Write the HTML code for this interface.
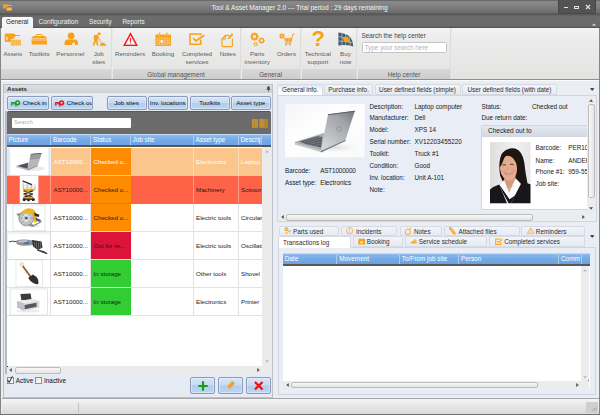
<!DOCTYPE html>
<html><head><meta charset="utf-8"><title>Tool &amp; Asset Manager</title>
<style>
*{box-sizing:border-box;margin:0;padding:0}
html,body{width:600px;height:415px;overflow:hidden;background:#e6eaf3}
body{font-family:"Liberation Sans","DejaVu Sans",sans-serif;font-size:6px;color:#222;position:relative;line-height:1}
.a{position:absolute}
.t{position:absolute;white-space:nowrap}
svg{position:absolute;overflow:visible}
.rl{position:absolute;text-align:center;font-size:6.25px;color:#5c5c5c;white-space:nowrap}
.gl{position:absolute;font-size:6.4px;color:#555;top:71.5px;text-align:center;white-space:nowrap}
.sep{position:absolute;top:28px;width:2px;height:51px;border-left:1px solid #dcdcdc;border-right:1px solid #e9e9e9}
.btn{position:absolute;height:14px;border:1px solid #8b9cb8;border-radius:2px;background:linear-gradient(#d6e5f8,#c6daf3 48%,#b0ccef 52%,#bdd5f4);box-shadow:inset 0 0 0 1px rgba(255,255,255,.35);font-size:6.25px;text-align:center;line-height:12.5px;color:#111;white-space:nowrap;overflow:hidden}
.hd{position:absolute;background:linear-gradient(#a6c8f0,#8ab7ea 15%,#74aae5 55%,#6aa2e2);box-shadow:inset 0 1px 0 #c3dbf6;overflow:hidden}
.th{position:absolute;top:0;height:100%;color:#fff;font-size:6.4px;line-height:12px;padding-left:2px;border-right:1px solid #a9cbf0;white-space:nowrap;overflow:hidden}
.row{position:absolute;left:6px;width:256px;height:28px;overflow:hidden}
.c{position:absolute;top:0;height:100%;font-size:6.2px;line-height:28px;padding-left:2.5px;white-space:nowrap;overflow:hidden;border-right:1px solid rgba(220,220,220,.8)}
.tab{position:absolute;font-size:6.35px;color:#2e2e2e;background:#e9edf5;border:1px solid #d6dae3;border-radius:2px 2px 0 0;white-space:nowrap;overflow:hidden;line-height:11px}
.lb{position:absolute;font-size:6.35px;color:#1a1a1a;white-space:nowrap}
.sb{position:absolute;background:#e9e9e9}
.thumb{position:absolute;background:linear-gradient(#f8f8f8,#e4e4e4);border:1px solid #bdbdbd;border-radius:2px}
.vthumb{position:absolute;background:linear-gradient(90deg,#f8f8f8,#e4e4e4);border:1px solid #bdbdbd;border-radius:2px}
</style></head><body>

<div class="a" style="left:0;top:0;width:600px;height:28px;background:#636363"></div>
<div class="a" style="left:0;top:0;width:600px;height:14px;background:linear-gradient(#5c5c5c,#8a8a8a 12%,#7e7e7e 50%,#6c6c6c 90%,#626262)"></div>
<div class="a" style="left:0;top:13.3px;width:600px;height:2.2px;background:linear-gradient(#606060,#565656 60%,#5e5e5e)"></div>
<div class="a" style="left:0;top:15.5px;width:600px;height:12.5px;background:linear-gradient(#6c6c6c,#6a6a6a 85%,#565656 92%,#565656)"></div>
<div class="t" style="left:211px;width:177px;text-align:center;top:4.6px;font-size:6.55px;color:#f6f6f6">Tool &amp; Asset Manager 2.0 --- Trial period : 29 days remaining</div>
<div class="a" style="left:558px;top:0;width:38px;height:13.5px;background:#535353;border:1px solid #474747;border-top:none;border-radius:0 0 2px 2px"></div>
<div class="a" style="left:564px;top:6.5px;width:4px;height:1.6px;background:#e4e4e4"></div>
<div class="a" style="left:574px;top:5.5px;width:5px;height:3.6px;border:1px solid #e4e4e4;border-top-width:1.4px"></div>
<svg style="left:586px;top:5.4px" width="4" height="4" viewBox="0 0 4 4"><path d="M0 0L4 4M4 0L0 4" stroke="#e4e4e4" stroke-width="1.1"/></svg>
<svg style="left:592px;top:22.5px" width="4" height="3" viewBox="0 0 4 3"><path d="M0 2.6L2 .4 4 2.6z" fill="#e8e4cc"/></svg>
<svg style="left:3px;top:4px" width="9" height="7" viewBox="0 0 9 7"><path d="M0 .3h4.5l2 .8H9v.8H6.3L4.5 2.8H3V4.5H.3z" fill="#f9a11b"/><rect x="3.6" y="3.6" width="5.2" height="3" fill="#f7b95a"/></svg>
<div class="a" style="left:2px;top:17px;width:30.5px;height:11px;background:linear-gradient(#fbfbfb,#f1f1f1);border-radius:2px 2px 0 0"></div>
<div class="t" style="left:6px;top:19.3px;font-size:6.3px;color:#222">General</div>
<div class="t" style="left:38.5px;top:19.1px;font-size:6.7px;color:#f2f2f2">Configuration</div>
<div class="t" style="left:89px;top:19.3px;font-size:6.3px;color:#f2f2f2">Security</div>
<div class="t" style="left:122.5px;top:19.3px;font-size:6.3px;color:#f2f2f2">Reports</div>
<div class="a" style="left:0;top:28px;width:600px;height:51px;background:linear-gradient(#f4f4f4,#ececec 20%,#e3e3e1)"></div>
<div class="a" style="left:0;top:68.5px;width:450px;height:10.5px;background:linear-gradient(#d8d8d8,#cdcdcd)"></div>
<div class="a" style="left:0;top:79px;width:600px;height:1px;background:#8f8f8f"></div>
<div class="a" style="left:0;top:80px;width:600px;height:1px;background:#fafafa"></div>
<div class="sep" style="left:111px"></div>
<div class="sep" style="left:240px"></div>
<div class="sep" style="left:300px"></div>
<div class="sep" style="left:356px"></div>
<div class="sep" style="left:450px"></div>
<div class="rl" style="left:-17.2px;width:60px;top:50.6px">Assets</div>
<div class="rl" style="left:9.200000000000003px;width:60px;top:50.6px">Toolkits</div>
<div class="rl" style="left:40.3px;width:60px;top:50.6px">Personnel</div>
<div class="rl" style="left:68.7px;width:60px;top:50.6px">Job</div>
<div class="rl" style="left:68.7px;width:60px;top:58.900000000000006px">sites</div>
<div class="rl" style="left:100px;width:60px;top:50.6px">Reminders</div>
<div class="rl" style="left:133px;width:60px;top:50.6px">Booking</div>
<div class="rl" style="left:167px;width:60px;top:50.6px">Completed</div>
<div class="rl" style="left:167px;width:60px;top:58.900000000000006px">services</div>
<div class="rl" style="left:197.8px;width:60px;top:50.6px">Notes</div>
<div class="rl" style="left:227.2px;width:60px;top:50.6px">Parts</div>
<div class="rl" style="left:227.2px;width:60px;top:58.900000000000006px">inventory</div>
<div class="rl" style="left:256.5px;width:60px;top:50.6px">Orders</div>
<div class="rl" style="left:287.8px;width:60px;top:50.6px">Technical</div>
<div class="rl" style="left:287.8px;width:60px;top:58.900000000000006px">support</div>
<div class="rl" style="left:315.5px;width:60px;top:50.6px">Buy</div>
<div class="rl" style="left:315.5px;width:60px;top:58.900000000000006px">now</div>
<div class="gl" style="left:136px;width:80px">Global management</div>
<div class="gl" style="left:240px;width:61px">General</div>
<div class="gl" style="left:364px;width:80px">Help center</div>
<div class="t" style="left:361.5px;top:32.5px;font-size:6.4px;color:#444">Search the help center</div>
<div class="a" style="left:361.5px;top:42px;width:85px;height:11px;background:#fff;border:1px solid #c4c4c4;border-radius:1.5px"></div>
<div class="t" style="left:364.5px;top:44.5px;font-size:6.4px;color:#b4b4b4">Type your search here</div>
<svg style="left:4px;top:32.5px" width="18" height="13" viewBox="0 0 18 13"><path d="M.8 1.2Q.8.6 1.6.6H9.5L12 1.9H16v1.2H12L9.8 4.4V6H7V9H1.6Q.8 9 .8 8.2z" fill="#f9a11b"/><rect x="2.3" y="4" width="1.2" height="3.2" fill="#fff" opacity=".9"/><rect x="6.8" y="6.7" width="10" height="5.8" fill="#fbc877"/><path d="M8 6.7v5.8M10 6.7v5.8M12.2 6.7v5.8M14.3 6.7v5.8M16 6.7v5.8" stroke="#f9a11b" stroke-width=".9" opacity=".75"/></svg>
<svg style="left:31px;top:33.5px" width="17" height="11" viewBox="0 0 17 11"><path d="M5 2V1.2Q5 .5 5.8 .5H10.6Q11.4.5 11.4 1.2V2" fill="none" stroke="#f9a11b" stroke-width="1"/><path d="M3 2H13.5Q15.5 2.4 16 4.6H.6Q1 2.4 3 2z" fill="#f9a11b"/><rect x=".6" y="5.2" width="15.4" height="5.3" fill="#f9a11b"/><path d="M.6 6.2H16" stroke="#fde3b5" stroke-width=".5"/><circle cx="8.3" cy="5" r="1.2" fill="#f9a11b" stroke="#fde3b5" stroke-width=".5"/></svg>
<svg style="left:63.5px;top:32px" width="14.5" height="13.5" viewBox="0 0 14.5 13.5"><circle cx="7.1" cy="3.8" r="3.4" fill="#f9a11b"/><path d="M.5 13V10.5Q.7 8 3.5 7.6H10.8Q13.8 8 14 10.5V13H11V10.8H8.3V13z" fill="#f9a11b"/></svg>
<svg style="left:91px;top:32px" width="16" height="14.5" viewBox="0 0 16 14.5"><circle cx="8.2" cy="1.8" r="1.5" fill="#f9a11b"/><path d="M3 3.2L6.4 2.6 7.8 4.8 6.6 8.2 7.4 13.6H5.8L5 9.6 3.4 13.6H1.6L3.3 8.4 2.6 5.4z" fill="#f9a11b"/><path d="M7 5L11 11.6" stroke="#f9a11b" stroke-width=".8"/><path d="M8.2 13.8Q10 10.6 11.8 10.6T15.6 13.8z" fill="#f9a11b"/></svg>
<svg style="left:122.5px;top:32px" width="15" height="14.5" viewBox="0 0 15 14.5"><path d="M7.5 1.6L13.8 13.4H1.2z" fill="#f0efef" stroke="#ff0d0d" stroke-width="1.35" stroke-linejoin="miter"/><path d="M7.5 6V10.4" stroke="#ff2a2a" stroke-width="1.1"/><circle cx="7.5" cy="11.7" r=".55" fill="#ff2a2a"/></svg>
<svg style="left:155px;top:32px" width="16.5" height="14.5" viewBox="0 0 16.5 14.5"><rect x=".4" y="2.6" width="15.6" height="11.4" rx=".8" fill="#f9a11b"/><path d="M4.6.4V3.6M11.8.4V3.6" stroke="#f9a11b" stroke-width="1.1"/><path d="M4.6 2.3V4.2M11.8 2.3V4.2" stroke="#fff" stroke-width=".5" opacity=".7"/><g stroke="#fde0b0" stroke-width=".45"><path d="M2 6H14.6M2 8.3H14.6M2 10.6H14.6M2 12.6H14.6M2 6V12.6M4.6 6V12.6M7.1 6V12.6M9.7 6V12.6M12.2 6V12.6M14.6 6V12.6"/></g><rect x="5.6" y="8.4" width="2.2" height="2.2" fill="#fff"/></svg>
<svg style="left:189px;top:33px" width="16.5" height="12.5" viewBox="0 0 16.5 12.5"><path d="M11.8 6.6V11.2H1V1H11.8V2.2" fill="none" stroke="#f9a11b" stroke-width="1.6"/><path d="M4 5L7 7.8 15.4 2.2" fill="none" stroke="#f9a11b" stroke-width="1.7"/></svg>
<svg style="left:221px;top:31.5px" width="13" height="15.5" viewBox="0 0 13 15.5"><path d="M4.4 3.4H8.2M11.4 6.6V13.4Q11.4 14.6 10.2 14.6H2.2Q1 14.6 1 13.4V6.8L4.4 3.4V6.8H1" fill="none" stroke="#f9a11b" stroke-width="1.15" stroke-linejoin="round"/><path d="M6.6 7.4L7.4 5 11 1.2 12.4 2.6 8.8 6.4z" fill="#f9a11b"/></svg>
<svg style="left:248px;top:31px" width="18" height="17" viewBox="248 31 18 17"><circle cx="254.5" cy="36.6" r="2.60" fill="none" stroke="#f9a11b" stroke-width="1.76"/><path d="M257.44 36.60L258.70 36.60" stroke="#f9a11b" stroke-width="1.43"/><path d="M256.58 38.68L257.47 39.57" stroke="#f9a11b" stroke-width="1.43"/><path d="M254.50 39.54L254.50 40.80" stroke="#f9a11b" stroke-width="1.43"/><path d="M252.42 38.68L251.53 39.57" stroke="#f9a11b" stroke-width="1.43"/><path d="M251.56 36.60L250.30 36.60" stroke="#f9a11b" stroke-width="1.43"/><path d="M252.42 34.52L251.53 33.63" stroke="#f9a11b" stroke-width="1.43"/><path d="M254.50 33.66L254.50 32.40" stroke="#f9a11b" stroke-width="1.43"/><path d="M256.58 34.52L257.47 33.63" stroke="#f9a11b" stroke-width="1.43"/><circle cx="261.6" cy="40.6" r="1.92" fill="none" stroke="#f9a11b" stroke-width="1.30"/><path d="M263.77 40.60L264.70 40.60" stroke="#f9a11b" stroke-width="1.05"/><path d="M263.13 42.13L263.79 42.79" stroke="#f9a11b" stroke-width="1.05"/><path d="M261.60 42.77L261.60 43.70" stroke="#f9a11b" stroke-width="1.05"/><path d="M260.07 42.13L259.41 42.79" stroke="#f9a11b" stroke-width="1.05"/><path d="M259.43 40.60L258.50 40.60" stroke="#f9a11b" stroke-width="1.05"/><path d="M260.07 39.07L259.41 38.41" stroke="#f9a11b" stroke-width="1.05"/><path d="M261.60 38.43L261.60 37.50" stroke="#f9a11b" stroke-width="1.05"/><path d="M263.13 39.07L263.79 38.41" stroke="#f9a11b" stroke-width="1.05"/><circle cx="255.6" cy="44.2" r="1.43" fill="none" stroke="#f9a11b" stroke-width="0.97"/><path d="M257.21 44.20L257.90 44.20" stroke="#f9a11b" stroke-width="0.78"/><path d="M256.40 45.59L256.75 46.19" stroke="#f9a11b" stroke-width="0.78"/><path d="M254.79 45.59L254.45 46.19" stroke="#f9a11b" stroke-width="0.78"/><path d="M253.99 44.20L253.30 44.20" stroke="#f9a11b" stroke-width="0.78"/><path d="M254.79 42.81L254.45 42.21" stroke="#f9a11b" stroke-width="0.78"/><path d="M256.40 42.81L256.75 42.21" stroke="#f9a11b" stroke-width="0.78"/></svg>
<svg style="left:278.5px;top:32.5px" width="16" height="13" viewBox="0 0 16 13"><circle cx="3" cy="3" r="2.6" fill="#f9a11b"/><path d="M3 1.6V4.4" stroke="#fff" stroke-width=".6"/><path d="M5.2 5H13L12 9.2H6.4z" fill="#f9a11b"/><path d="M15.6 1.2H13.8L11.8 10.4H6" fill="none" stroke="#f9a11b" stroke-width=".9"/><circle cx="7" cy="11.8" r=".9" fill="#f9a11b"/><circle cx="11" cy="11.8" r=".9" fill="#f9a11b"/><path d="M7.6 5V9M9.4 5V9M11.2 5V9" stroke="#fde0b0" stroke-width=".4"/></svg>
<div class="t" style="left:311.6px;top:27.6px;font-size:22px;font-weight:bold;color:#f9a11b;line-height:1">?</div>
<svg style="left:338px;top:32px" width="15.5" height="15" viewBox="0 0 15.5 15"><path d="M.4.6Q8 1.4 11.4 4.6T15.2 14.4Q9 12.4 .4 13.4z" fill="#3f5c6e"/><g stroke="#e9e9e7" stroke-width=".55" fill="none"><path d="M.4 4.6Q7 5 10 7.4M.4 9Q8 9 14.4 10.8M4 .9V13M7.6 2V12.8M11 4.4Q12 8 12.2 13.4"/></g><path d="M4.6 5.2L9.6 4.6 12.4 10.4 6.2 10z" fill="#f9a11b"/></svg><div class="a" style="left:0;top:28px;width:1.1px;height:387px;background:#868686"></div>
<div class="a" style="left:598.8px;top:28px;width:1.2px;height:387px;background:#868686"></div>
<div class="a" style="left:1.1px;top:81px;width:597.7px;height:317px;background:#eaedf4"></div>
<div class="a" style="left:2.6px;top:83.5px;width:270.6px;height:314px;border:1px solid #bcc0ca;background:#e6eaf3"></div><div class="a" style="left:5.2px;top:111px;width:1.5px;height:263px;background:#b6bac4"></div>
<div class="a" style="left:4px;top:84.5px;width:268px;height:8.5px;background:linear-gradient(#e0e0e0,#cfcfcf)"></div>
<div class="t" style="left:7px;top:86px;font-size:6.1px;font-weight:bold;color:#222">Assets</div>
<svg style="left:266px;top:85.5px" width="5" height="6" viewBox="0 0 5 6"><path d="M1.4.4H3.6V3H4.4V3.7H.6V3H1.4z" fill="#333"/><path d="M2.5 3.7V5.8" stroke="#333" stroke-width=".6"/></svg>
<div class="btn" style="left:6.5px;top:95.5px;width:42.0px;text-align:left;"><svg style="left:3.2px;top:3px" width="9.5" height="7" viewBox="0 0 9.5 7"><path d="M.8 5.4V2.6H3.2V4.6" fill="none" stroke="#1f9c1f" stroke-width="1.4"/><circle cx="6.6" cy="2.8" r="1.9" fill="none" stroke="#1f9c1f" stroke-width="1.5"/><path d="M4.9 3.4V6.6" stroke="#1f9c1f" stroke-width="1.3"/></svg><span style="position:absolute;left:15.2px;top:0;font-size:6.2px">Check in</span></div>
<div class="btn" style="left:50.5px;top:95.5px;width:42.0px;text-align:left;"><svg style="left:3.2px;top:3px" width="9.5" height="7" viewBox="0 0 9.5 7"><path d="M.8 5.4V2.6H3.2V4.6" fill="none" stroke="#e8141c" stroke-width="1.4"/><circle cx="6.6" cy="2.8" r="1.9" fill="none" stroke="#e8141c" stroke-width="1.5"/><path d="M4.9 3.4V6.6" stroke="#e8141c" stroke-width="1.3"/></svg><span style="position:absolute;left:15.2px;top:0;font-size:6.2px">Check ou</span></div>
<div class="btn" style="left:106.5px;top:95.5px;width:40.0px;">Job sites</div>
<div class="btn" style="left:148px;top:95.5px;width:39.5px;">Inv. locations</div>
<div class="btn" style="left:190px;top:95.5px;width:39.5px;">Toolkits</div>
<div class="btn" style="left:231px;top:95.5px;width:39.5px;">Asset type</div>
<div class="a" style="left:6.5px;top:111px;width:264.5px;height:23px;background:#6b6b6b;border-top:1px solid #575757;border-radius:2px 2px 0 0"></div>
<div class="a" style="left:11.5px;top:118px;width:119.5px;height:10px;background:#fff;border-radius:1px"></div>
<div class="t" style="left:14px;top:120.3px;font-size:5.9px;color:#b0b0b0">Search</div>
<svg style="left:251.7px;top:118.6px;opacity:.88" width="15.6" height="8.8" viewBox="0 0 15.6 8.8"><rect x="0" y="0" width="6" height="8.8" fill="#d5981f"/><rect x="2" y="0" width="1" height="8.8" fill="#bf8d2c"/><rect x="4" y="0" width=".8" height="8.8" fill="#c4902a"/><rect x="7.3" y="0" width="6.2" height="8.8" fill="#d5981f"/><rect x="7.3" y="0" width="1.4" height="8.8" fill="#c08e2c"/><rect x="11.6" y="0" width="1.9" height="8.8" fill="#b98a30"/><rect x="14.3" y="0" width="1.3" height="8.8" fill="#dc9c1c"/></svg>
<div class="hd" style="left:6.5px;top:133.5px;width:264.5px;height:11.5px">
<div class="th" style="left:0.0px;width:44.5px;line-height:11.5px">Picture</div>
<div class="th" style="left:44.5px;width:40px;line-height:11.5px">Barcode</div>
<div class="th" style="left:84.5px;width:39.5px;line-height:11.5px">Status</div>
<div class="th" style="left:124.0px;width:63.0px;line-height:11.5px">Job site</div>
<div class="th" style="left:187.0px;width:45.0px;line-height:11.5px">Asset type</div>
<div class="th" style="left:232.0px;width:23.80000000000001px;line-height:11.5px">Descrip</div>
</div>
<div class="a" style="left:6.5px;top:145px;width:264.5px;height:1.6px;background:#585858"></div>
<div class="a" style="left:6.5px;top:146.6px;width:255.8px;height:219.4px;background:#fff"></div>
<div class="row" style="left:6.5px;top:147.5px;width:255.8px;background:#fac68b;color:#fff;border-bottom:1px solid #fac68b">
<div class="c" style="left:0;width:44.5px;border-color:rgba(255,255,255,.35);background:#dce9f8"></div>
<div class="c" style="left:44.5px;width:40px;border-color:rgba(255,255,255,.35)">AST10000...</div>
<div class="c" style="left:84.5px;width:39.5px;background:#ff8c00;color:#fff;border:none">Checked o...</div>
<div class="c" style="left:124px;width:63px;border-color:rgba(255,255,255,.35)"></div>
<div class="c" style="left:187px;width:45px;border-color:rgba(255,255,255,.35)">Electronics</div>
<div class="c" style="left:232px;width:23.8px;border:none">Laptop</div>
</div>
<div class="row" style="left:6.5px;top:175.5px;width:255.8px;background:#fe6347;color:#1a1a1a;border-bottom:1px solid #fe6347">
<div class="c" style="left:0;width:44.5px;border-color:rgba(255,255,255,.35)"></div>
<div class="c" style="left:44.5px;width:40px;border-color:rgba(255,255,255,.35)">AST10000...</div>
<div class="c" style="left:84.5px;width:39.5px;background:#ff8c00;color:#1a1a1a;border:none">Checked o...</div>
<div class="c" style="left:124px;width:63px;border-color:rgba(255,255,255,.35)"></div>
<div class="c" style="left:187px;width:45px;border-color:rgba(255,255,255,.35)">Machinery</div>
<div class="c" style="left:232px;width:23.8px;border:none">Scissor</div>
</div>
<div class="row" style="left:6.5px;top:203.5px;width:255.8px;background:#fff;color:#1a1a1a;border-bottom:1px solid #e2e2e2">
<div class="c" style="left:0;width:44.5px;border-color:#e2e2e2"></div>
<div class="c" style="left:44.5px;width:40px;border-color:#e2e2e2">AST10000...</div>
<div class="c" style="left:84.5px;width:39.5px;background:#ff8c00;color:#1a1a1a;border:none">Checked o...</div>
<div class="c" style="left:124px;width:63px;border-color:#e2e2e2"></div>
<div class="c" style="left:187px;width:45px;border-color:#e2e2e2">Electric tools</div>
<div class="c" style="left:232px;width:23.8px;border:none">Circular</div>
</div>
<div class="row" style="left:6.5px;top:231.5px;width:255.8px;background:#fff;color:#1a1a1a;border-bottom:1px solid #e2e2e2">
<div class="c" style="left:0;width:44.5px;border-color:#e2e2e2"></div>
<div class="c" style="left:44.5px;width:40px;border-color:#e2e2e2">AST10000...</div>
<div class="c" style="left:84.5px;width:39.5px;background:#dc143c;color:#1a1a1a;border:none">Out for re...</div>
<div class="c" style="left:124px;width:63px;border-color:#e2e2e2"></div>
<div class="c" style="left:187px;width:45px;border-color:#e2e2e2">Electric tools</div>
<div class="c" style="left:232px;width:23.8px;border:none">Oscillati</div>
</div>
<div class="row" style="left:6.5px;top:259.5px;width:255.8px;background:#fff;color:#1a1a1a;border-bottom:1px solid #e2e2e2">
<div class="c" style="left:0;width:44.5px;border-color:#e2e2e2"></div>
<div class="c" style="left:44.5px;width:40px;border-color:#e2e2e2">AST10000...</div>
<div class="c" style="left:84.5px;width:39.5px;background:#32cd32;color:#1a1a1a;border:none">In storage</div>
<div class="c" style="left:124px;width:63px;border-color:#e2e2e2"></div>
<div class="c" style="left:187px;width:45px;border-color:#e2e2e2">Other tools</div>
<div class="c" style="left:232px;width:23.8px;border:none">Shovel</div>
</div>
<div class="row" style="left:6.5px;top:287.5px;width:255.8px;background:#fff;color:#1a1a1a;border-bottom:1px solid #e2e2e2">
<div class="c" style="left:0;width:44.5px;border-color:#e2e2e2"></div>
<div class="c" style="left:44.5px;width:40px;border-color:#e2e2e2">AST10000...</div>
<div class="c" style="left:84.5px;width:39.5px;background:#32cd32;color:#1a1a1a;border:none">In storage</div>
<div class="c" style="left:124px;width:63px;border-color:#e2e2e2"></div>
<div class="c" style="left:187px;width:45px;border-color:#e2e2e2">Electronics</div>
<div class="c" style="left:232px;width:23.8px;border:none">Printer</div>
</div><svg style="left:9.6px;top:148.3px" width="38.4" height="27.0" viewBox="9.6 148.3 38.4 27.0"><rect x="9.6" y="148.3" width="38.4" height="27.0" fill="#fff" stroke="#eeeeee" stroke-width=".5"/><g transform="translate(11.84 150.5) scale(.42)"><ellipse cx="50.7" cy="43.6" rx="26" ry="6" fill="#e4e4e4" opacity=".8"/><polygon points="10,37.2 39.2,28.6 37.7,47.2 10.7,40.8" fill="#9a9da2"/><polygon points="14.2,37.2 37.5,30.6 36.3,43.2 20.7,39.8" fill="#4e5156"/><polygon points="10,37.2 36.5,46 36.5,47.8 10.3,39.8" fill="#c9cbce"/><polygon points="44.2,9.2 70,6.9 60.9,36.2 36.2,46.8" fill="#b3b6ba"/><polygon points="44.2,9.2 70,6.9 66,20 41.5,22.5" fill="#999ca1"/><polygon points="44.2,9.2 70,6.9 69.7,8.2 44.7,10.4" fill="#4d5054"/><polygon points="36.2,46.8 60.9,36.2 61.1,37.4 36.5,48.2" fill="#6d7074"/></g></svg>
<svg style="left:19.8px;top:176.4px" width="18.099999999999998" height="26.900000000000006" viewBox="19.8 176.4 18.099999999999998 26.900000000000006"><rect x="19.8" y="176.4" width="18.099999999999998" height="26.900000000000006" fill="#fff" stroke="#f4f4f4" stroke-width=".5"/><g><path d="M22.3 180.6L31.8 184.4L31.8 185.8L22.3 182z" fill="#1e1e1e"/><path d="M23 182V189.6M27 183.6V189.6M31 185.4V189.6M35 186.4V190" stroke="#8d8d8d" stroke-width=".5"/><path d="M22.4 185.6H35.4M22.4 187.6H35.4" stroke="#b9b9b9" stroke-width=".5"/><path d="M22.4 189.2H35.2L33.6 191.4H23.4z" fill="#e9a916"/><path d="M23.4 191.2L32.6 194.6M32.6 191.2L23.4 194.6M23.4 194.6L32.6 197.8M32.6 194.6L23.4 197.8" stroke="#222" stroke-width="1.3"/><path d="M23.4 191.2L32.6 194.6M23.4 194.6L32.6 197.8" stroke="#e0a216" stroke-width=".5"/><path d="M23 197.4H33.6V199.4H23z" fill="#e9a916"/><path d="M22.6 199H34.4V200.2H22.6z" fill="#1e1e1e"/><rect x="22.6" y="199" width="2.8" height="2.4" rx=".8" fill="#1e1e1e"/><rect x="27" y="199.4" width="2.6" height="2.2" rx=".8" fill="#1e1e1e"/><rect x="31.6" y="199" width="2.8" height="2.4" rx=".8" fill="#1e1e1e"/></g></svg>
<svg style="left:12.6px;top:204.5px" width="32.0" height="25.900000000000006" viewBox="12.6 204.5 32.0 25.900000000000006"><rect x="12.6" y="204.5" width="32.0" height="25.900000000000006" fill="#fff" stroke="#cfcfcf" stroke-width=".5"/><g><ellipse cx="30" cy="225.4" rx="10" ry="1.6" fill="#efefef"/><path d="M15.8 213.4L19.4 212.4L33 224.6L41 220.4L41.6 221.6L32.6 226.4L29 225.6z" fill="#8e9297"/><path d="M16.6 214.6L25 216.6M18.6 217L26 219.6M22 221.4L30 222.4" stroke="#a8acb0" stroke-width=".6"/><circle cx="25.8" cy="217.6" r="7.4" fill="#c4c7cb" stroke="#7b7f84" stroke-width=".8"/><circle cx="25.8" cy="217.6" r="4.6" fill="#dfe1e3" stroke="#969a9f" stroke-width=".5"/><path d="M21 213L30.4 222.4M30.6 212.8L21 222.4M19 217.6H32.6" stroke="#8d9196" stroke-width=".5"/><circle cx="25.8" cy="217.6" r="1.4" fill="#55595e"/><path d="M20.6 213.6Q22.6 208.8 27.6 207.8Q32.6 207.6 35 211L36.4 216L36.2 221.6L33.4 222.6Q34.6 216.6 31.6 213.4Q27.6 210.6 22.6 213z" fill="#f1b61a"/><path d="M33.4 212L39 214.2L38.4 216.6L34.4 215.4z" fill="#2a2a2a"/><path d="M35 217L40.6 219.4L39.6 221.4L35.6 220z" fill="#55585c"/></g></svg>
<svg style="left:7px;top:232.6px" width="43.3" height="26.400000000000006" viewBox="7 232.6 43.3 26.400000000000006"><rect x="7" y="232.6" width="43.3" height="26.400000000000006" fill="#fff" stroke="#c9c9c9" stroke-width=".5"/><g><path d="M9 241.5Q12 240.3 17 241.2" stroke="#333" stroke-width=".9" fill="none"/><path d="M16.5 240.2Q20 238.6 26 239.2L33 240.2L33.6 244.6L26 245.4Q19 245.4 16.5 243.4z" fill="#8f9499"/><path d="M18 240.6Q22 239.4 27 239.9L27 241.6L18 242z" fill="#c3c6ca"/><rect x="24.5" y="241.6" width="4.2" height="2" fill="#3f6fb4"/><path d="M32 239.6L41.5 241.2L42.5 247L38 249.6L33 246z" fill="#2f3133"/><path d="M34.6 241.2V247.4M36.6 241.4V248.4M38.6 241.8V248.6M40.4 242V248" stroke="#8a8d91" stroke-width=".6"/><path d="M37.5 249L43.8 250.6L47.6 252.8L47 253.8L42 252.2L37 250.2z" fill="#3c3e40"/></g></svg>
<svg style="left:15.6px;top:260.3px" width="26.699999999999996" height="26.599999999999966" viewBox="15.6 260.3 26.699999999999996 26.599999999999966"><rect x="15.6" y="260.3" width="26.699999999999996" height="26.599999999999966" fill="#fff" stroke="#d4d4d4" stroke-width=".5"/><g><path d="M21 264.6L30.6 277.6" stroke="#7a3d10" stroke-width="1.7"/><path d="M21 264.6L30.6 277.6" stroke="#c9711f" stroke-width="1"/><path d="M19.2 264L22.4 262.8L23.6 265.6L21 267.2z" fill="#f3ede4" stroke="#bda98a" stroke-width=".4"/><path d="M27.8 278.4L32.4 274.8Q36.4 276.6 37.8 280Q38.6 283.4 37.2 284.8Q31.6 284.4 27.8 278.4z" fill="#332f2e"/></g></svg>
<svg style="left:10px;top:288.6px" width="37.4" height="26.0" viewBox="10 288.6 37.4 26.0"><rect x="10" y="288.6" width="37.4" height="26.0" fill="#fff" stroke="#c9c9c9" stroke-width=".5"/><g><ellipse cx="28" cy="310.6" rx="12" ry="1.6" fill="#ececec"/><path d="M20.4 293.6L30.6 293L31.6 299.4L21.4 300z" fill="#3a3c3f"/><path d="M17 300.6L33.6 298.6L39.4 300.6L39.4 307.4L24 310.4L17 307z" fill="#d6d8db"/><path d="M17 300.6L33.6 298.6L39.4 300.6L24 303z" fill="#eceded"/><path d="M24.6 304.6L36.6 302.4L36.6 306.4L24.6 308.8z" fill="#55585c"/><path d="M17 300.6L24 303V310.4L17 307z" fill="#bfc2c6"/></g></svg>
<div class="sb" style="left:262.3px;top:146.6px;width:8.7px;height:219.4px;background:#ebebeb"></div>
<svg style="left:264.6px;top:150px" width="4" height="3" viewBox="0 0 4 3"><path d="M0 2.6L2 .2 4 2.6z" fill="#b9b9b9"/></svg>
<svg style="left:264.6px;top:359.5px" width="4" height="3" viewBox="0 0 4 3"><path d="M0 .2L2 2.6 4 .2z" fill="#b9b9b9"/></svg>
<div class="sb" style="left:6.5px;top:366px;width:264.5px;height:8px;background:#ebebeb"></div>
<div class="thumb" style="left:14.5px;top:366.6px;width:46.5px;height:7px"></div>
<svg style="left:9.4px;top:368.2px" width="3" height="4" viewBox="0 0 3 4"><path d="M2.8 0L.2 2 2.8 4z" fill="#555"/></svg>
<svg style="left:257px;top:368.2px" width="3" height="4" viewBox="0 0 3 4"><path d="M.2 0L2.8 2 .2 4z" fill="#555"/></svg>
<div class="a" style="left:6.5px;top:365.5px;width:1.2px;height:1.5px;background:#333"></div>
<div class="a" style="left:6.5px;top:377.3px;width:7px;height:7px;background:linear-gradient(135deg,#e6e6e6,#fff);border:1px solid #8e8f8f"></div>
<svg style="left:7.4px;top:376.2px" width="6" height="7.5" viewBox="0 0 6 7.5"><path d="M.6 4L2.2 6.4 5.4.4" fill="none" stroke="#222" stroke-width="1"/></svg>
<div class="t" style="left:15.8px;top:378.3px;font-size:6.4px;color:#111">Active</div>
<div class="a" style="left:35.2px;top:377.3px;width:7px;height:7px;background:linear-gradient(135deg,#e2e2e2,#fff);border:1px solid #8e8f8f"></div>
<div class="t" style="left:44px;top:378.3px;font-size:6.4px;color:#111">Inactive</div>
<div class="btn" style="left:190.3px;top:377px;width:25.0px;height:17px"><svg style="left:7px;top:2.6px" width="10" height="10" viewBox="0 0 10 10"><path d="M5 .3V9.7M.3 5H9.7" stroke="#16a016" stroke-width="2.2"/></svg></div>
<div class="btn" style="left:218px;top:377px;width:25px;height:17px"><svg style="left:7px;top:2.4px" width="10" height="11" viewBox="0 0 10 11"><path d="M6.2.8L9 3.2 3.8 9 1.2 6.6z" fill="#f9a11b"/><path d="M.9 7.2L3.2 9.4.3 10.6z" fill="#f7c06a"/></svg></div>
<div class="btn" style="left:245.8px;top:377px;width:25.0px;height:17px"><svg style="left:7.5px;top:3px" width="9.5" height="9.5" viewBox="0 0 10 10"><path d="M1 1L9 9M9 1L1 9" stroke="#e81212" stroke-width="2.4"/></svg></div>
<div class="a" style="left:1.5px;top:398px;width:597px;height:1px;background:#a6a6a6"></div>
<div class="a" style="left:1.5px;top:399px;width:597px;height:14.5px;background:linear-gradient(#f4f4f4,#e4e4e4 60%,#dadada)"></div>
<div class="a" style="left:0;top:413.5px;width:600px;height:1.5px;background:#6e6e6e"></div>
<div class="a" style="left:77.5px;top:403px;width:1px;height:10px;background:#c2c2c2"></div>
<div class="a" style="left:586px;top:402px;width:12px;height:11px;background:#cfcfcf"></div>
<svg style="left:591px;top:406px" width="6" height="6" viewBox="0 0 6 6"><path d="M4.5 1h1M3 2.5h1M4.5 2.5h1M1.5 4h1M3 4h1M4.5 4h1" stroke="#999" stroke-width=".8"/></svg><div class="a" style="left:276.8px;top:94.5px;width:320px;height:127.5px;background:#e8edf6;border:1px solid #d0d5df"></div>
<div class="tab" style="left:277.4px;top:83.9px;width:45.60000000000002px;height:11.599999999999994px;background:linear-gradient(#d9e6f7,#f6f9fd 45%,#fdfeff);border-bottom:none;line-height:10.599999999999994px;text-align:center">General info.</div>
<div class="tab" style="left:324.3px;top:84.1px;width:48.69999999999999px;height:10.5px;background:linear-gradient(#f1f4f9,#e6eaf2);line-height:9.5px;text-align:center">Purchase info.</div>
<div class="tab" style="left:374.5px;top:84.1px;width:86.0px;height:10.5px;background:linear-gradient(#f1f4f9,#e6eaf2);line-height:9.5px;text-align:center">User defined fields (simple)</div>
<div class="tab" style="left:461.8px;top:84.1px;width:95.40000000000003px;height:10.5px;background:linear-gradient(#f1f4f9,#e6eaf2);line-height:9.5px;text-align:center">User defined fields (with date)</div>
<svg style="left:589.5px;top:88px" width="4.4" height="3" viewBox="0 0 4.4 3"><path d="M0 .2H4.4L2.2 2.8z" fill="#222"/></svg>
<svg style="left:285.3px;top:104.4px" width="79.7" height="53.2" viewBox="285.3 104.4 79.7 53.2"><defs><linearGradient id="bgw" x1="0" y1="0" x2="1" y2="1"><stop offset="0" stop-color="#f5f5f5"/><stop offset=".4" stop-color="#fefefe"/><stop offset="1" stop-color="#fafafa"/></linearGradient><linearGradient id="lid" x1=".9" y1="0" x2=".25" y2="1"><stop offset="0" stop-color="#777a7f"/><stop offset=".3" stop-color="#a1a4a8"/><stop offset=".65" stop-color="#b9bbbf"/><stop offset="1" stop-color="#d4d6d8"/></linearGradient><radialGradient id="shd"><stop offset="0" stop-color="#dcdcdc"/><stop offset="1" stop-color="#fafafa" stop-opacity="0"/></radialGradient></defs><rect x="285.3" y="104.4" width="79.7" height="53.2" fill="url(#bgw)"/><ellipse cx="336" cy="148" rx="26" ry="6" fill="url(#shd)"/><polygon points="295,142.4 325,133.2 323,151.6 295.6,145" fill="#a9acb0"/><polygon points="299.6,142 318,136.6 322.6,137.4 321.6,148 307,144.6" fill="#5a5d62"/><path d="M304 142.2L322 137.4M307 143.4L322 139.8M311 144.4L322 142.2M315 145.6L322 144.4" stroke="#8a8d92" stroke-width=".5"/><polygon points="295,142.6 321.6,150.6 321.6,152.6 295.4,145" fill="#c4c6c9"/><polygon points="328.4,114.6 355.2,111.2 345.8,140.2 321,151.4" fill="url(#lid)"/><polygon points="328.4,114.6 355.2,111.2 355,112.2 328.6,115.6" fill="#5d6064"/><polygon points="321,151.4 345.8,140.2 346,141.4 321.4,152.8" fill="#7b7e82"/><circle cx="339.4" cy="129.4" r="2.3" fill="none" stroke="#85888d" stroke-width=".7"/></svg>
<div class="lb" style="left:285px;top:168.0px;">Barcode:</div>
<div class="lb" style="left:320.2px;top:168.0px;letter-spacing:-.16px;">AST1000000</div>
<div class="lb" style="left:285px;top:180.3px;">Asset type:</div>
<div class="lb" style="left:320.2px;top:180.3px;">Electronics</div>
<div class="lb" style="left:369.5px;top:103.5px;">Description:</div>
<div class="lb" style="left:414.5px;top:103.5px;">Laptop computer</div>
<div class="lb" style="left:369.5px;top:115.3px;">Manufacturer:</div>
<div class="lb" style="left:414.5px;top:115.3px;">Dell</div>
<div class="lb" style="left:369.5px;top:127.2px;">Model:</div>
<div class="lb" style="left:414.5px;top:127.2px;">XPS 14</div>
<div class="lb" style="left:369.5px;top:139.10000000000002px;">Serial number:</div>
<div class="lb" style="left:414.5px;top:139.10000000000002px;">XV12203455220</div>
<div class="lb" style="left:369.5px;top:151.0px;">Toolkit:</div>
<div class="lb" style="left:414.5px;top:151.0px;">Truck #1</div>
<div class="lb" style="left:369.5px;top:162.8px;">Condition:</div>
<div class="lb" style="left:414.5px;top:162.8px;">Good</div>
<div class="lb" style="left:369.5px;top:174.70000000000002px;">Inv. location:</div>
<div class="lb" style="left:414.5px;top:174.70000000000002px;">Unit A-101</div>
<div class="lb" style="left:369.5px;top:186.60000000000002px;">Note:</div>
<div class="lb" style="left:481.5px;top:103.5px;">Status:</div>
<div class="lb" style="left:532px;top:103.5px;">Checked out</div>
<div class="lb" style="left:481.5px;top:115.3px;">Due return date:</div>
<div class="a" style="left:481px;top:124.8px;width:106.2px;height:85.4px;background:#fff;border:1px solid #d0d5df;border-right:none;border-radius:2.5px 0 0 2.5px;overflow:hidden"><div class="a" style="left:0;top:0;width:106px;height:11.2px;background:linear-gradient(#e4e8f0,#d2d7e1)"></div><div class="lb" style="left:6px;top:2.1px;font-size:6.5px">Checked out to</div><div class="lb" style="left:53.6px;top:19.6px">Barcode:</div><div class="lb" style="left:86.2px;top:19.6px">PER1000</div><div class="lb" style="left:53.6px;top:31.8px">Name:</div><div class="lb" style="left:86.2px;top:31.8px">ANDERSON</div><div class="lb" style="left:53.6px;top:43.7px">Phone #1:</div><div class="lb" style="left:86.2px;top:43.7px">959-555</div><div class="lb" style="left:53.6px;top:55.5px">Job site:</div></div>
<svg style="left:490.3px;top:142.4px" width="40.7" height="61.6" viewBox="490.3 142.4 40.7 61.6"><defs><linearGradient id="pbg" x1="0" y1="0" x2="1" y2="0"><stop offset="0" stop-color="#dedede"/><stop offset=".6" stop-color="#f1f1f1"/><stop offset="1" stop-color="#e6e6e6"/></linearGradient><clipPath id="pc"><rect x="490.3" y="142.4" width="40.7" height="61.6"/></clipPath></defs><g clip-path="url(#pc)"><rect x="490.3" y="142.4" width="40.7" height="61.6" fill="url(#pbg)"/><path d="M500.4 176Q498.2 160 502.6 153.4Q507.6 147.6 515.4 149Q523 151.6 524.6 163Q525.6 173 528 185L519 188L503 182z" fill="#1d1512"/><path d="M504.6 178L515.6 176L516.6 190L507 196L503.6 188z" fill="#d39a7c"/><ellipse cx="508.8" cy="168.6" rx="8.5" ry="12.4" transform="rotate(-6 508.8 168.6)" fill="#e2ac8d"/><ellipse cx="504.6" cy="171.4" rx="2.2" ry="1.6" fill="#e59c86" opacity=".6"/><ellipse cx="514.4" cy="170.6" rx="2.2" ry="1.6" fill="#e59c86" opacity=".6"/><path d="M500.2 168Q499.6 158 504.6 154.2Q507 152.6 508 153.4Q503.6 158.6 502.4 164z" fill="#1d1512"/><path d="M507.4 153.2Q513 150.6 518.6 154.6Q522.6 159 521.6 176L519 180Q519.6 168 517.6 163Q514 157 507.4 153.2z" fill="#1d1512"/><path d="M503 165.6q1.6-1 3.2 0M510.4 165q1.6-1 3.4.1" stroke="#2e1f19" stroke-width=".9" fill="none"/><path d="M504.8 173.6Q509 176.8 513.4 173Q509 174.6 504.8 173.6z" fill="#fff" stroke="#b45f56" stroke-width=".55"/><path d="M508.4 167.4L507.8 171" stroke="#c98d70" stroke-width=".5"/><path d="M497.8 187.4L504.4 180.4L509.4 193L516 178.6L525.4 188.6L516 204H500z" fill="#fbfbfb"/><path d="M506 187.6Q509.6 190.6 514 186.4" stroke="#d8d2c4" stroke-width=".8" fill="none"/><path d="M490.3 190Q494 186.4 499.6 184.8L507.4 204H490.3z" fill="#17171b"/><path d="M531 184.6Q526 183 521.6 183.6L511 204H531z" fill="#17171b"/><path d="M499.6 185L503.6 194L509 204H511L515.4 196L509.8 199.6z" fill="#17171b"/></g></svg>
<div class="sb" style="left:587.2px;top:95.5px;width:8.6px;height:117.7px;background:#ececec"></div>
<div class="vthumb" style="left:588.2px;top:103.7px;width:6.6px;height:94.3px"></div>
<svg style="left:589.4px;top:98.6px" width="4.2" height="3" viewBox="0 0 4 3"><path d="M0 2.8L2 .2 4 2.8z" fill="#555"/></svg>
<svg style="left:589.4px;top:206.6px" width="4.2" height="3" viewBox="0 0 4 3"><path d="M0 .2L2 2.8 4 .2z" fill="#555"/></svg>
<div class="sb" style="left:277.8px;top:213.2px;width:309.4px;height:8px;background:#ececec"></div>
<div class="thumb" style="left:285.7px;top:213.8px;width:247.8px;height:7px"></div>
<svg style="left:280.6px;top:215.3px" width="3" height="4" viewBox="0 0 3 4"><path d="M2.8 0L.2 2 2.8 4z" fill="#555"/></svg>
<svg style="left:581.5px;top:215.3px" width="3" height="4" viewBox="0 0 3 4"><path d="M.2 0L2.8 2 .2 4z" fill="#555"/></svg>
<div class="a" style="left:587.2px;top:213.2px;width:8.6px;height:8px;background:#e8edf6"></div>
<div class="a" style="left:277.6px;top:247px;width:318.6px;height:148px;background:#e8edf6;border:1px solid #d0d5df"></div>
<div class="tab" style="left:278.5px;top:225.6px;width:60.89999999999998px;height:10.599999999999994px;background:linear-gradient(#f1f4f9,#e6eaf2);line-height:9.599999999999994px;text-align:left"><svg style="left:4px;top:0.7px" width="7.4" height="7.4" viewBox="0 0 8 8"><circle cx="2.6" cy="2.4" r="1.5" fill="none" stroke="#f9a11b" stroke-width="1.2"/><circle cx="6" cy="4.6" r="1.1" fill="none" stroke="#f9a11b" stroke-width=".9"/><circle cx="2.8" cy="6.4" r=".8" fill="none" stroke="#f9a11b" stroke-width=".8"/></svg><span style="position:absolute;left:13.5px;top:0">Parts used</span></div>
<div class="tab" style="left:341.4px;top:225.6px;width:55.60000000000002px;height:10.599999999999994px;background:linear-gradient(#f1f4f9,#e6eaf2);line-height:9.599999999999994px;text-align:left"><svg style="left:4px;top:0.6px" width="7.4" height="7.4" viewBox="0 0 8 8"><circle cx="4" cy="4" r="3.4" fill="none" stroke="#f9a11b" stroke-width=".8"/><path d="M4 1.8V4.8" stroke="#f9a11b" stroke-width=".8"/><circle cx="4" cy="6" r=".45" fill="#f9a11b"/></svg><span style="position:absolute;left:13.6px;top:0">Incidents</span></div>
<div class="tab" style="left:399.6px;top:225.6px;width:42.19999999999999px;height:10.599999999999994px;background:linear-gradient(#f1f4f9,#e6eaf2);line-height:9.599999999999994px;text-align:left"><svg style="left:4.6px;top:0.3px" width="6.3" height="7.8" viewBox="0 0 6.5 8"><path d="M2.2 1.8H3.4M5.4 3.6V6.6Q5.4 7.4 4.6 7.4H1.4Q.6 7.4 .6 6.6V3.4L2.2 1.8" fill="none" stroke="#f9a11b" stroke-width=".9" stroke-linejoin="round"/><path d="M3.4 3.6L3.8 2.4 5.4.6 6.2 1.4 4.6 3.2z" fill="#f9a11b"/></svg><span style="position:absolute;left:13.4px;top:0">Notes</span></div>
<div class="tab" style="left:443.6px;top:225.6px;width:76.39999999999998px;height:10.599999999999994px;background:linear-gradient(#f1f4f9,#e6eaf2);line-height:9.599999999999994px;text-align:left"><svg style="left:4.6px;top:0.6px" width="7" height="7.5" viewBox="0 0 7.5 8"><path d="M1.4 1.4L5.6 6.6" stroke="#f9a11b" stroke-width="2.9" stroke-linecap="round"/><path d="M1.6 1.6L5.2 6.2" stroke="#fde3b5" stroke-width=".7" stroke-linecap="round"/></svg><span style="position:absolute;left:13.9px;top:0">Attached files</span></div>
<div class="tab" style="left:521px;top:225.6px;width:63.700000000000045px;height:10.599999999999994px;background:linear-gradient(#f1f4f9,#e6eaf2);line-height:9.599999999999994px;text-align:left"><svg style="left:5px;top:0.9px" width="7.4" height="7" viewBox="0 0 8 7.5"><path d="M4 .8L7.4 6.8H.6z" fill="none" stroke="#f9a11b" stroke-width=".8"/><path d="M4 2.8V5" stroke="#f9a11b" stroke-width=".7"/></svg><span style="position:absolute;left:13.8px;top:0">Reminders</span></div>
<div class="tab" style="left:352.7px;top:236.4px;width:49.900000000000034px;height:10.799999999999983px;background:linear-gradient(#f1f4f9,#e6eaf2);line-height:9.799999999999983px;text-align:left"><svg style="left:4px;top:0.9px" width="7.4" height="7" viewBox="0 0 8 7.5"><rect x=".3" y="1" width="7.4" height="6" fill="#f9a11b"/><path d="M2.2 0V2M5.8 0V2" stroke="#f9a11b" stroke-width=".9"/><rect x="2.6" y="3.4" width="2.6" height="2.4" fill="#fde9c6"/></svg><span style="position:absolute;left:13px;top:0">Booking</span></div>
<div class="tab" style="left:404.6px;top:236.4px;width:82.79999999999995px;height:10.799999999999983px;background:linear-gradient(#f1f4f9,#e6eaf2);line-height:9.799999999999983px;text-align:left"><svg style="left:4.2px;top:1.9px" width="7.6" height="5.4" viewBox="0 0 8.5 6"><path d="M.4 4.4H8M2.2 4.4V2.6H4V4.4M5 4.4V1H6.6V4.4" fill="none" stroke="#f9a11b" stroke-width="1"/></svg><span style="position:absolute;left:13.2px;top:0">Service schedule</span></div>
<div class="tab" style="left:489px;top:236.4px;width:95.70000000000005px;height:10.799999999999983px;background:linear-gradient(#f1f4f9,#e6eaf2);line-height:9.799999999999983px;text-align:left"><svg style="left:4.5px;top:0.8px" width="8.2" height="7.3" viewBox="0 0 9 8"><path d="M6.4 4.2V7H.8V1H6.4V1.6" fill="none" stroke="#f9a11b" stroke-width="1.1"/><path d="M2.6 3.2L4 4.8 8.2 1.6" fill="none" stroke="#f9a11b" stroke-width="1.1"/></svg><span style="position:absolute;left:14.2px;top:0">Completed services</span></div>
<div class="tab" style="left:278px;top:236px;width:73.30000000000001px;height:12px;background:#fff;border-bottom:none;line-height:11px;text-align:left"><span style="position:absolute;left:4px;top:0">Transactions log</span></div>
<svg style="left:589.6px;top:235px" width="4.4" height="3" viewBox="0 0 4.4 3"><path d="M0 .2H4.4L2.2 2.8z" fill="#222"/></svg>
<div class="a" style="left:282.7px;top:253px;width:307px;height:136px;background:#fff"></div>
<div class="hd" style="left:282.7px;top:253px;width:307px;height:11px">
<div class="th" style="left:0.0px;width:54.5px;line-height:11px">Date</div>
<div class="th" style="left:54.5px;width:62.60000000000002px;line-height:11px">Movement</div>
<div class="th" style="left:117.10000000000002px;width:59.19999999999999px;line-height:11px">To/From job site</div>
<div class="th" style="left:176.3px;width:100px;line-height:11px">Person</div>
<div class="th" style="left:276.3px;width:23.200000000000045px;line-height:11px">Comm</div>
</div>
<div class="a" style="left:282.7px;top:264px;width:307px;height:1.6px;background:#585858"></div>
<div class="sb" style="left:581.4px;top:265.6px;width:7.8px;height:115.6px;background:#ececec"></div>
<svg style="left:583.4px;top:268.6px" width="4" height="3" viewBox="0 0 4 3"><path d="M0 2.6L2 .2 4 2.6z" fill="#b9b9b9"/></svg>
<svg style="left:583.4px;top:375.6px" width="4" height="3" viewBox="0 0 4 3"><path d="M0 .2L2 2.6 4 .2z" fill="#b9b9b9"/></svg>
<div class="sb" style="left:282.7px;top:381.2px;width:306.5px;height:7.8px;background:#ececec"></div>
<div class="thumb" style="left:291px;top:381.7px;width:246.8px;height:6.8px"></div>
<svg style="left:285.6px;top:383.2px" width="3" height="4" viewBox="0 0 3 4"><path d="M2.8 0L.2 2 2.8 4z" fill="#555"/></svg>
<svg style="left:575.6px;top:383.2px" width="3" height="4" viewBox="0 0 3 4"><path d="M.2 0L2.8 2 .2 4z" fill="#555"/></svg>
<div class="a" style="left:588.2px;top:380.4px;width:1px;height:1px;background:#666"></div></body></html>
